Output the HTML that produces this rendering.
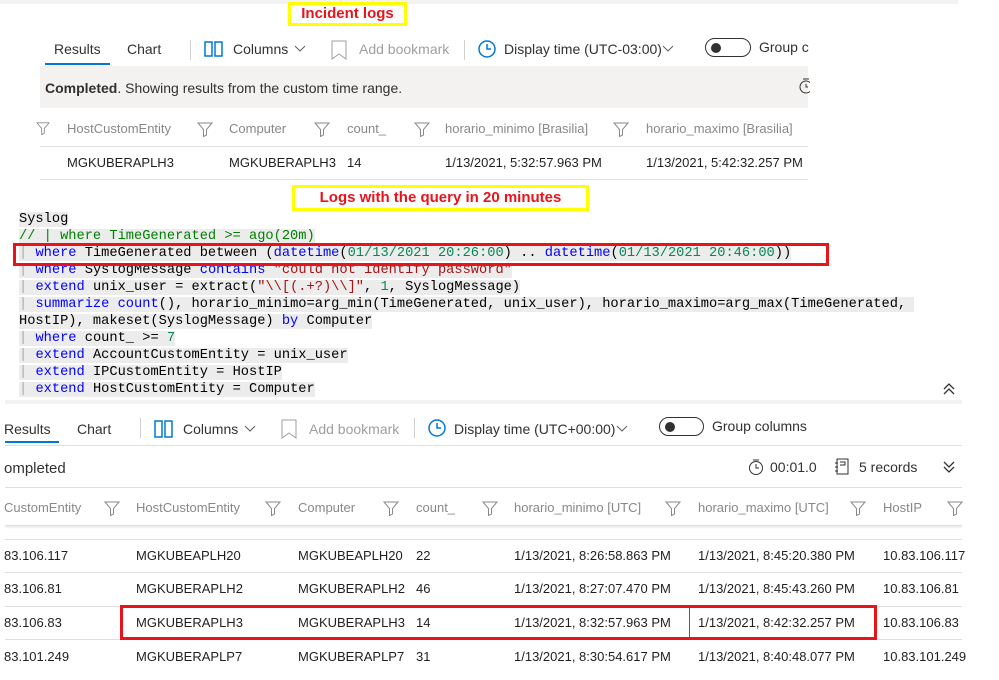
<!DOCTYPE html>
<html><head><meta charset="utf-8"><style>
*{margin:0;padding:0;box-sizing:border-box}
body{width:999px;height:680px;background:#fff;position:relative;overflow:hidden;font-family:"Liberation Sans",sans-serif;color:#323130}
.a{position:absolute;white-space:nowrap}
.t{font-size:14px}
.h{font-size:13px;color:#8a8886}
.d{font-size:13px;color:#201f1e}
.g{color:#a19f9d}
.ln{position:absolute;height:1px;background:#e1dfdd}
.code{position:absolute;left:19px;font-family:"Liberation Mono",monospace;font-size:13.7px;line-height:17px;color:#000;white-space:pre}
.code span.bg{background:#ececec}
.kw{color:#0000ff}.cm{color:#008000}.st{color:#a31515}.nm{color:#098658}.bar{color:#aaa}
.red{position:absolute;border:3px solid #e8141c}
.yel{position:absolute;border:3px solid #ffff00;color:#e8141c;font-weight:bold;font-size:15px;text-align:center}
.f{position:absolute}
</style></head><body>
<svg width="0" height="0" style="position:absolute"><defs><symbol id="fn" viewBox="0 0 16 16"><path d="M1 2h14l-5.5 6.5V14l-3 1.5V8.5z" fill="none" stroke="#8a8886" stroke-width="1"/></symbol></defs></svg>
<div class="a" style="left:0;top:0;width:958px;height:4px;background:#f3f2f1"></div>
<div class="yel" style="left:288px;top:2px;width:119px;height:24px;line-height:18px">Incident logs</div>

<!-- top panel -->
<div class="a t" style="left:54px;top:41px">Results</div>
<div class="a t" style="left:127px;top:41px">Chart</div>
<div class="a" style="left:45px;top:63px;width:65px;height:2px;background:#0078d4"></div>
<div class="a" style="left:190px;top:40px;width:1px;height:20px;background:#d2d0ce"></div>
<svg class="a" style="left:204px;top:41px" width="20" height="16"><rect x="1" y="1" width="7" height="14" fill="none" stroke="#0078d4" stroke-width="1.5"/><rect x="11" y="1" width="7" height="14" fill="none" stroke="#0078d4" stroke-width="1.5"/></svg>
<div class="a t" style="left:233px;top:41px">Columns</div>
<svg class="a" style="left:294px;top:45px" width="12" height="8"><path d="M1 1l5 5 5-5" fill="none" stroke="#605e5c"/></svg>
<svg class="a" style="left:331px;top:40px" width="16" height="20"><path d="M1 1h14v18l-7-5-7 5z" fill="none" stroke="#a19f9d"/></svg>
<div class="a t g" style="left:359px;top:41px">Add bookmark</div>
<div class="a" style="left:464px;top:40px;width:1px;height:20px;background:#d2d0ce"></div>
<svg class="a" style="left:477px;top:39px" width="20" height="20"><circle cx="10" cy="10" r="8" fill="none" stroke="#0078d4" stroke-width="1.5"/><path d="M10 5v5h4" fill="none" stroke="#0078d4" stroke-width="1.5"/></svg>
<div class="a t" style="left:504px;top:41px">Display time (UTC-03:00)</div>
<svg class="a" style="left:662px;top:45px" width="12" height="8"><path d="M1 1l5 5 5-5" fill="none" stroke="#605e5c"/></svg>
<div class="a" style="left:705px;top:38px;width:46px;height:19px;border:1px solid #323130;border-radius:10px"></div>
<div class="a" style="left:711px;top:43px;width:10px;height:10px;border-radius:5px;background:#323130"></div>
<div class="a t" style="left:759px;top:39px">Group c</div>
<div class="a" style="left:40px;top:66px;width:768px;height:42px;background:#f3f2f1"></div>
<div class="a t" style="left:45px;top:80px"><b>Completed</b>. Showing results from the custom time range.</div>
<svg class="a" style="left:798px;top:77px" width="12" height="18"><circle cx="8" cy="10" r="6" fill="none" stroke="#323130"/><path d="M5 2h6M8 7v3h2" fill="none" stroke="#323130"/></svg>
<div class="ln" style="left:40px;top:146px;width:768px"></div>
<div class="ln" style="left:40px;top:179px;width:768px"></div>
<svg class="f" style="left:36px;top:121px" width="14" height="14"><use href="#fn"/></svg>
<div class="a h" style="left:67px;top:121px">HostCustomEntity</div>
<svg class="f" style="left:197px;top:121px" width="16" height="16"><use href="#fn"/></svg>
<div class="a h" style="left:229px;top:121px">Computer</div>
<svg class="f" style="left:314px;top:121px" width="16" height="16"><use href="#fn"/></svg>
<div class="a h" style="left:347px;top:121px">count_</div>
<svg class="f" style="left:414px;top:121px" width="16" height="16"><use href="#fn"/></svg>
<div class="a h" style="left:445px;top:121px">horario_minimo [Brasilia]</div>
<svg class="f" style="left:613px;top:121px" width="16" height="16"><use href="#fn"/></svg>
<div class="a h" style="left:646px;top:121px">horario_maximo [Brasilia]</div>
<div class="a d" style="left:67px;top:155px">MGKUBERAPLH3</div>
<div class="a d" style="left:229px;top:155px">MGKUBERAPLH3</div>
<div class="a d" style="left:347px;top:155px">14</div>
<div class="a d" style="left:445px;top:155px">1/13/2021, 5:32:57.963 PM</div>
<div class="a d" style="left:646px;top:155px">1/13/2021, 5:42:32.257 PM</div>

<div class="yel" style="left:292px;top:185px;width:297px;height:26px;line-height:20px">Logs with the query in 20 minutes</div>

<div class="code" style="top:211px"><span class="bg">Syslog</span>
<span class="bg"><span class="cm">// | where TimeGenerated &gt;= ago(20m)</span></span>
<span class="bg"><span class="bar">|</span> <span class="kw">where</span> TimeGenerated between (<span class="kw">datetime</span>(<span class="nm">01/13/2021 20:26:00</span>) .. <span class="kw">datetime</span>(<span class="nm">01/13/2021 20:46:00</span>))</span>
<span class="bg"><span class="bar">|</span> <span class="kw">where</span> SyslogMessage <span class="kw">contains</span> <span class="st">"could not identify password"</span></span>
<span class="bg"><span class="bar">|</span> <span class="kw">extend</span> unix_user = extract(<span class="st">"\\[(.+?)\\]"</span>, <span class="nm">1</span>, SyslogMessage)</span>
<span class="bg"><span class="bar">|</span> <span class="kw">summarize</span> <span class="kw">count</span>(), horario_minimo=arg_min(TimeGenerated, unix_user), horario_maximo=arg_max(TimeGenerated, </span>
<span class="bg">HostIP), makeset(SyslogMessage) <span class="kw">by</span> Computer</span>
<span class="bg"><span class="bar">|</span> <span class="kw">where</span> count_ &gt;= <span class="nm">7</span></span>
<span class="bg"><span class="bar">|</span> <span class="kw">extend</span> AccountCustomEntity = unix_user</span>
<span class="bg"><span class="bar">|</span> <span class="kw">extend</span> IPCustomEntity = HostIP</span>
<span class="bg"><span class="bar">|</span> <span class="kw">extend</span> HostCustomEntity = Computer</span></div>
<div class="red" style="left:13px;top:243px;width:816px;height:23px"></div>
<svg class="a" style="left:943px;top:383px" width="12" height="12"><path d="M1 6l5-5 5 5M1 11l5-5 5 5" fill="none" stroke="#323130" stroke-width="1.3"/></svg>
<div class="a" style="left:5px;top:400px;width:957px;height:4px;background:#f3f2f1"></div>

<!-- bottom panel -->
<div class="a t" style="left:4px;top:421px">Results</div>
<div class="a t" style="left:77px;top:421px">Chart</div>
<div class="a" style="left:5px;top:441px;width:54px;height:2px;background:#0078d4"></div>
<div class="a" style="left:140px;top:418px;width:1px;height:20px;background:#d2d0ce"></div>
<svg class="a" style="left:154px;top:420px" width="20" height="18"><rect x="1" y="1" width="7" height="16" fill="none" stroke="#0078d4" stroke-width="1.5"/><rect x="11" y="1" width="7" height="16" fill="none" stroke="#0078d4" stroke-width="1.5"/></svg>
<div class="a t" style="left:183px;top:421px">Columns</div>
<svg class="a" style="left:244px;top:425px" width="12" height="8"><path d="M1 1l5 5 5-5" fill="none" stroke="#605e5c"/></svg>
<svg class="a" style="left:281px;top:419px" width="16" height="20"><path d="M1 1h14v18l-7-5-7 5z" fill="none" stroke="#a19f9d"/></svg>
<div class="a t g" style="left:309px;top:421px">Add bookmark</div>
<div class="a" style="left:414px;top:418px;width:1px;height:20px;background:#d2d0ce"></div>
<svg class="a" style="left:427px;top:418px" width="20" height="20"><circle cx="10" cy="10" r="8" fill="none" stroke="#0078d4" stroke-width="1.5"/><path d="M10 5v5h4" fill="none" stroke="#0078d4" stroke-width="1.5"/></svg>
<div class="a t" style="left:454px;top:421px">Display time (UTC+00:00)</div>
<svg class="a" style="left:616px;top:425px" width="12" height="8"><path d="M1 1l5 5 5-5" fill="none" stroke="#605e5c"/></svg>
<div class="a" style="left:659px;top:417px;width:45px;height:19px;border:1px solid #323130;border-radius:10px"></div>
<div class="a" style="left:665px;top:422px;width:10px;height:10px;border-radius:5px;background:#323130"></div>
<div class="a t" style="left:712px;top:418px">Group columns</div>
<div class="ln" style="left:5px;top:445px;width:957px"></div>
<div class="a" style="left:4px;top:460px;font-size:15px">ompleted</div>
<svg class="a" style="left:748px;top:458px" width="16" height="18"><circle cx="8" cy="10" r="6.5" fill="none" stroke="#323130"/><path d="M5 2h6M8 6v4h3" fill="none" stroke="#323130"/></svg>
<div class="a t" style="left:770px;top:459px">00:01.0</div>
<svg class="a" style="left:835px;top:458px" width="14" height="18"><rect x="2" y="1" width="11" height="15" fill="none" stroke="#323130"/><path d="M5 4h5v3H5M0 5h3M0 9h3M0 13h3" fill="none" stroke="#323130"/></svg>
<div class="a t" style="left:859px;top:459px">5 records</div>
<svg class="a" style="left:943px;top:461px" width="12" height="12"><path d="M1 1l5 5 5-5M1 6l5 5 5-5" fill="none" stroke="#323130" stroke-width="1.3"/></svg>
<div class="ln" style="left:5px;top:487px;width:957px"></div>
<div class="a h" style="left:4px;top:500px">CustomEntity</div>
<svg class="f" style="left:104px;top:500px" width="16" height="16"><use href="#fn"/></svg>
<div class="a h" style="left:136px;top:500px">HostCustomEntity</div>
<svg class="f" style="left:265px;top:500px" width="16" height="16"><use href="#fn"/></svg>
<div class="a h" style="left:298px;top:500px">Computer</div>
<svg class="f" style="left:383px;top:500px" width="16" height="16"><use href="#fn"/></svg>
<div class="a h" style="left:416px;top:500px">count_</div>
<svg class="f" style="left:482px;top:500px" width="16" height="16"><use href="#fn"/></svg>
<div class="a h" style="left:514px;top:500px">horario_minimo [UTC]</div>
<svg class="f" style="left:665px;top:500px" width="16" height="16"><use href="#fn"/></svg>
<div class="a h" style="left:698px;top:500px">horario_maximo [UTC]</div>
<svg class="f" style="left:850px;top:500px" width="16" height="16"><use href="#fn"/></svg>
<div class="a h" style="left:883px;top:500px">HostIP</div>
<svg class="f" style="left:947px;top:500px" width="16" height="16"><use href="#fn"/></svg>
<div class="a" style="left:5px;top:525px;width:957px;height:1px;background:#e1dfdd;box-shadow:0 1px 2px #ccc"></div>
<div class="ln" style="left:5px;top:539px;width:957px"></div>
<div class="ln" style="left:5px;top:572px;width:957px"></div>
<div class="ln" style="left:5px;top:606px;width:957px"></div>
<div class="ln" style="left:5px;top:639px;width:957px"></div>

<div class="a d" style="left:4px;top:548px">83.106.117</div><div class="a d" style="left:136px;top:548px">MGKUBEAPLH20</div><div class="a d" style="left:298px;top:548px">MGKUBEAPLH20</div><div class="a d" style="left:416px;top:548px">22</div><div class="a d" style="left:514px;top:548px">1/13/2021, 8:26:58.863 PM</div><div class="a d" style="left:698px;top:548px">1/13/2021, 8:45:20.380 PM</div><div class="a d" style="left:883px;top:548px">10.83.106.117</div>
<div class="a d" style="left:4px;top:581px">83.106.81</div><div class="a d" style="left:136px;top:581px">MGKUBERAPLH2</div><div class="a d" style="left:298px;top:581px">MGKUBERAPLH2</div><div class="a d" style="left:416px;top:581px">46</div><div class="a d" style="left:514px;top:581px">1/13/2021, 8:27:07.470 PM</div><div class="a d" style="left:698px;top:581px">1/13/2021, 8:45:43.260 PM</div><div class="a d" style="left:883px;top:581px">10.83.106.81</div>
<div class="a d" style="left:4px;top:615px">83.106.83</div><div class="a d" style="left:136px;top:615px">MGKUBERAPLH3</div><div class="a d" style="left:298px;top:615px">MGKUBERAPLH3</div><div class="a d" style="left:416px;top:615px">14</div><div class="a d" style="left:514px;top:615px">1/13/2021, 8:32:57.963 PM</div><div class="a d" style="left:698px;top:615px">1/13/2021, 8:42:32.257 PM</div><div class="a d" style="left:883px;top:615px">10.83.106.83</div>
<div class="a d" style="left:4px;top:649px">83.101.249</div><div class="a d" style="left:136px;top:649px">MGKUBERAPLP7</div><div class="a d" style="left:298px;top:649px">MGKUBERAPLP7</div><div class="a d" style="left:416px;top:649px">31</div><div class="a d" style="left:514px;top:649px">1/13/2021, 8:30:54.617 PM</div><div class="a d" style="left:698px;top:649px">1/13/2021, 8:40:48.077 PM</div><div class="a d" style="left:883px;top:649px">10.83.101.249</div>
<div class="a" style="left:689px;top:607px;width:1px;height:31px;background:#0078d4"></div>
<div class="red" style="left:120px;top:605px;width:757px;height:35px"></div>
</body></html>
